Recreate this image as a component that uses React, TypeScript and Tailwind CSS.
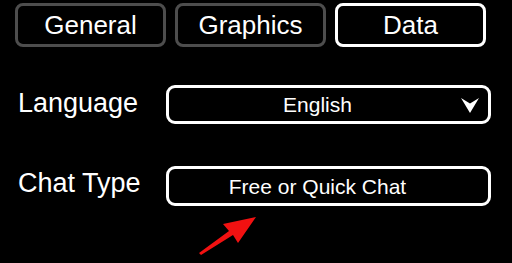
import React from "react";

const font = { fontFamily: '"Liberation Sans", Arial, sans-serif' };

function Tab({ label, active }: { label: string; active?: boolean }) {
  return (
    <div
      className={
        "w-[151px] h-[44px] flex items-center justify-center rounded-[8px] border-[3px] text-[26px] leading-none text-white " +
        (active ? "border-white" : "border-[#4d4d4d]")
      }
    >
      {label}
    </div>
  );
}

function Chevron() {
  return (
    <svg width="18" height="16" viewBox="0 0 18 16" className="absolute right-[9px] top-[10px]">
      <path d="M0 0 L9 5.5 L18 0 L9 15 Z" fill="#fff" />
    </svg>
  );
}

export default function App() {
  return (
    <div className="relative w-[512px] h-[263px] bg-black text-white overflow-hidden" style={font}>
      <div className="flex gap-[9px] pl-[15px] pt-[3px]">
        <Tab label="General" />
        <Tab label="Graphics" />
        <Tab label="Data" active />
      </div>

      <div className="flex items-center mt-[38px] pl-[18px]">
        <div className="w-[148px] text-[27px] leading-none -mt-[2px]">Language</div>
        <div className="relative w-[325px] h-[39px] rounded-[9px] border-[3px] border-white flex items-center justify-center pr-[22px] text-[21px] leading-none">
          English
          <Chevron />
        </div>
      </div>

      <div className="flex items-center mt-[44px] pl-[18px]">
        <div className="w-[148px] text-[27px] leading-none -mt-[8px]">Chat Type</div>
        <div className="w-[325px] h-[40px] rounded-[9px] border-[3px] border-white flex items-center justify-center pr-[22px] text-[21px] leading-none -mt-[2px]">
          Free or Quick Chat
        </div>
      </div>

      <svg className="absolute left-0 top-0" width="512" height="263" viewBox="0 0 512 263">
        <path d="M199 253 L229 231 L223 224 L256 217 L238 243 L233 235 L201 255 Z" fill="#f21111" />
      </svg>
    </div>
  );
}
